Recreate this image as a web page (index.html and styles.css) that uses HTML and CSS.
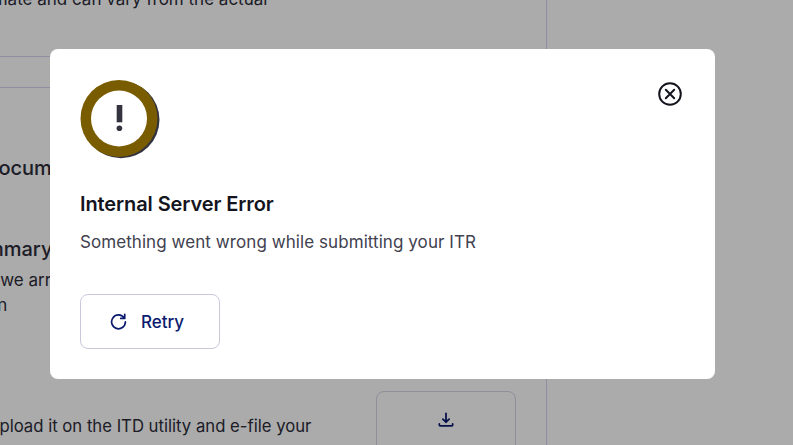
FILE: index.html
```html
<!DOCTYPE html>
<html lang="en">
<head>
  <meta charset="UTF-8" />
  <title>File your ITR</title>
  <link rel="stylesheet" href="styles.css">
</head>
<body>

  <main class="page">
    <p class="note">approximate and can vary from the actual</p>
    <div class="rule rule-first"></div>
    <div class="rule rule-second"></div>
    <h3 class="doc-title">Documents</h3>
    <h3 class="summary-title">Summary</h3>
    <p class="summary-text">How we arrive at the numbers<br>return</p>
    <div class="upload-row">
      <p class="upload-text">Upload it on the ITD utility and e-file your</p>
      <button class="btn-download">
        <svg width="16" height="16" viewBox="0 0 18 18" fill="none" stroke="#0a1a6e" stroke-width="2" stroke-linecap="round" stroke-linejoin="round">
          <path d="M9 1.500v10M5.500 8 9 11.500 12.500 8M1.500 13.500v1.200a1 1 0 0 0 1 1h13a1 1 0 0 0 1-1v-1.200"/>
        </svg>
      </button>
    </div>
  </main>

  <div class="overlay">
    <section class="modal">
      <div class="modal-head">
        <svg class="icon-alert" width="82" height="82" viewBox="0 0 82 82">
          <circle cx="41" cy="39.800" r="38.500" fill="#33333f"/>
          <circle cx="39" cy="38.500" r="38.500" fill="#7a5c00"/>
          <circle cx="39" cy="38.500" r="28" fill="#fff"/>
          <rect x="36.700" y="25" width="5.600" height="17.300" fill="#33333f"/>
          <circle cx="39.400" cy="48.300" r="2.800" fill="#33333f"/>
        </svg>
        <button class="btn-close" aria-label="Close">
          <svg width="24" height="24" viewBox="0 0 24 24" fill="none" stroke="#14141e" stroke-width="2" stroke-linecap="round">
            <circle cx="12" cy="12" r="10.800"/>
            <path d="M7.800 7.800l8.400 8.400M16.200 7.800l-8.400 8.400"/>
          </svg>
        </button>
      </div>
      <h2 class="modal-title">Internal Server Error</h2>
      <p class="modal-text">Something went wrong while submitting your ITR</p>
      <button class="btn-retry">
        <svg width="17" height="17" viewBox="0 0 18 18" fill="none" stroke="#0a1a6e" stroke-width="1.800" stroke-linecap="round" stroke-linejoin="round">
          <path d="M15 5.200A7.300 7.300 0 1 0 16.300 9.500"/>
          <path d="M15.600 1.500v4.200h-4.200"/>
        </svg>
        Retry
      </button>
    </section>
  </div>

</body>
</html>
```

FILE: styles.css
```css
* {
  box-sizing: border-box;
}
html, body {
  margin: 0;
  height: 100%;
  overflow: hidden;
}
body {
  font-family: Inter, "Liberation Sans", sans-serif;
  background: #fff;
  color: #2c2c3a;
}
.page {
  width: 547px;
  height: 445px;
  border-right: 1px solid #d6d6f0;
  overflow: hidden;
}
.note {
  margin: -13px 0 0 -67px;
  font-size: 17px;
  line-height: 24px;
  white-space: nowrap;
}
.rule {
  height: 1px;
  background: #d6d6f0;
}
.rule-first {
  margin-top: 45px;
}
.rule-second {
  margin-top: 30px;
}
.doc-title,
.summary-title {
  margin: 0 0 0 -16px;
  font-size: 20px;
  font-weight: 500;
  line-height: 28px;
}
.doc-title {
  margin-top: 66px;
}
.summary-title {
  margin-top: 53px;
  margin-left: -39px;
}
.summary-text {
  margin: 5px 0 0 -41px;
  font-size: 17px;
  line-height: 25px;
  white-space: nowrap;
}
.upload-row {
  display: flex;
  align-items: flex-start;
  margin-top: 73px;
}
.upload-text {
  flex: none;
  width: 376px;
  margin: 23px 0 0 -13px;
  font-size: 16.7px;
  line-height: 24px;
  white-space: nowrap;
}
.btn-download {
  flex: none;
  display: flex;
  justify-content: center;
  width: 140px;
  height: 70px;
  margin-left: 13px;
  padding-top: 20px;
  background: #fff;
  border: 1px solid #d6d6e6;
  border-radius: 8px;
}
.overlay {
  position: fixed;
  inset: 0;
  background: rgba(0, 0, 0, 0.33);
}
.modal {
  position: absolute;
  left: 50px;
  top: 49px;
  width: 665px;
  height: 330px;
  padding: 31px 30px;
  background: #fff;
  border-radius: 8px;
}
.modal-head {
  display: flex;
  justify-content: space-between;
  align-items: flex-start;
}
.icon-alert {
  display: block;
}
.btn-close {
  width: 24px;
  height: 24px;
  margin: 2px 3px 0 0;
  padding: 0;
  background: none;
  border: none;
}
.modal-title {
  margin: 30px 0 0;
  color: #14141e;
  font-size: 20px;
  font-weight: 600;
  line-height: 24px;
  letter-spacing: -0.1px;
}
.modal-text {
  margin: 14px 0 0;
  color: #41414f;
  font-size: 17px;
  line-height: 24px;
  letter-spacing: 0.07px;
}
.btn-retry {
  display: flex;
  align-items: center;
  justify-content: center;
  gap: 14px;
  width: 140px;
  height: 55px;
  margin-top: 40px;
  padding: 0 6px 0 0;
  background: #fff;
  border: 1px solid #c9c9dc;
  border-radius: 8px;
  color: #0a1a6e;
  font-family: inherit;
  font-size: 17px;
  font-weight: 500;
}
```
